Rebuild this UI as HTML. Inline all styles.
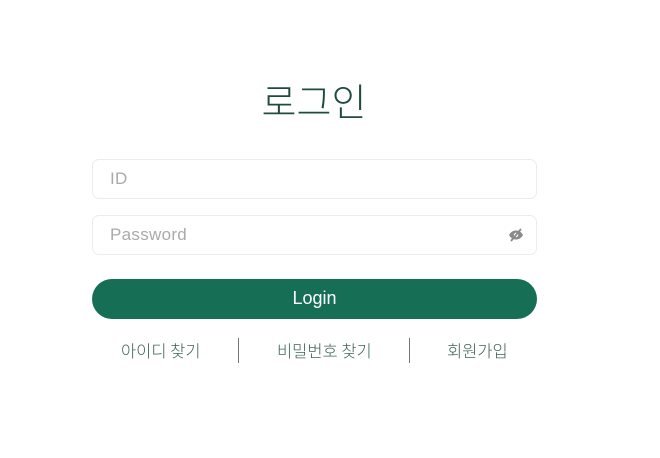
<!DOCTYPE html>
<html><head><meta charset="utf-8"><style>
body{margin:0;width:660px;height:458px;background:#fff;font-family:"Liberation Sans","Noto Sans CJK KR",sans-serif;position:relative;overflow:hidden}
.t{position:absolute;left:0;width:628px;top:78px;text-align:center;font-size:38px;color:#1e4b3e;font-weight:300;font-family:"Noto Sans CJK KR",sans-serif;line-height:44px}
.in{position:absolute;left:92px;width:443px;height:38px;border:1px solid #ececec;border-radius:7px;box-sizing:content-box}
.in span{position:absolute;left:17px;top:9px;font-size:17px;color:#aaa;letter-spacing:0.3px}
.btn{position:absolute;left:92px;top:279px;width:445px;height:40px;border-radius:20px;background:#166e55;color:#fff;text-align:center;line-height:38px;font-size:18px}
.l{position:absolute;top:338px;font-size:16.5px;color:#3d6355;font-family:"Noto Sans CJK KR",sans-serif;font-weight:300}
.d{position:absolute;top:338px;width:1px;height:25px;background:#777}
</style></head><body>
<div class="t">로그인</div>
<div class="in" style="top:159px"><span>ID</span></div>
<div class="in" style="top:215px"><span>Password</span>
<svg style="position:absolute;right:12px;top:12px" width="16" height="14" viewBox="0 0 16 14"><path d="M1 7C3 3.5 5.5 2.5 8 2.5S13 3.5 15 7C13 10.5 10.5 11.5 8 11.5S3 10.5 1 7Z" fill="#8a8a8a"/><circle cx="8" cy="7" r="2.2" fill="#fff"/><path d="M3 13L13 1" stroke="#8a8a8a" stroke-width="1.8"/></svg></div>
<div class="btn">Login</div>
<div class="l" style="left:121px">아이디 찾기</div>
<div class="d" style="left:238px"></div>
<div class="l" style="left:277px">비밀번호 찾기</div>
<div class="d" style="left:409px"></div>
<div class="l" style="left:447px">회원가입</div>
</body></html>
